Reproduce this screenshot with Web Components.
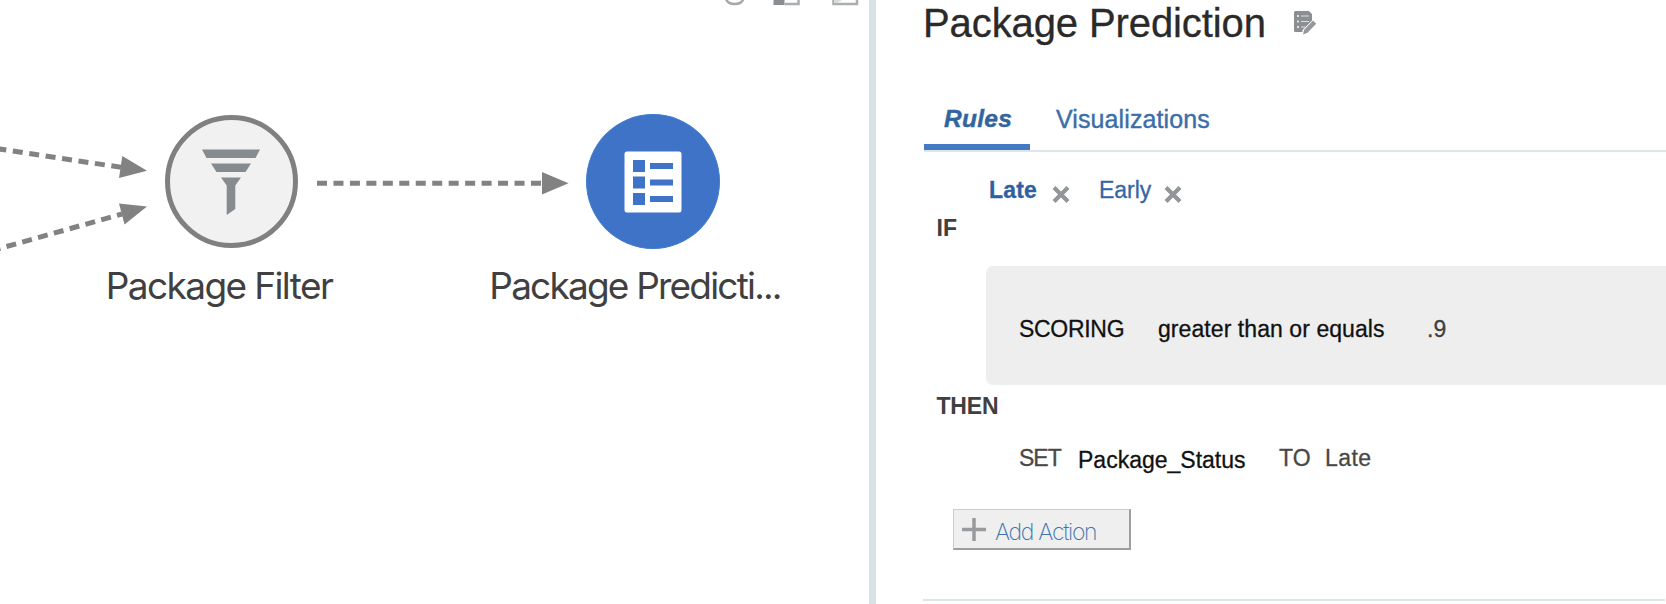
<!DOCTYPE html>
<html lang="en">
<head>
<meta charset="utf-8">
<title>Package Prediction</title>
<style>
html,body{margin:0;height:100%;overflow:hidden;background:#fff}
body{font-family:"Liberation Sans",Arial,sans-serif}
</style>
</head>
<body>
<pipeline-app></pipeline-app>
<script>
const define = (name, html) => customElements.define(name, class extends HTMLElement {
  constructor() {
    super();
    const t = document.createElement('template');
    t.innerHTML = html;
    this.attachShadow({mode: 'open'}).append(t.content.cloneNode(true));
  }
});

define('tool-strip', `
<style>:host{display:block;height:8px}svg{display:block}</style>
<svg width="869" height="8" viewBox="0 0 869 8">
  <path d="M726 -1c1 3 4.500 5 8.700 5s7.700-2 8.700-5" fill="none" stroke="#a4a8ab" stroke-width="2.500"/>
  <path d="M773.500 0h11v5h-11z" fill="#8a8e91"/><path d="M784.500 4h14V0" fill="none" stroke="#a9adaf" stroke-width="2.500"/>
  <path d="M833.500 0v4h23.500V0" fill="none" stroke="#abaeb1" stroke-width="2.500"/><path d="M834 0h8l-5 3h-3z" fill="#d9dbdc"/>
</svg>`);

define('flow-links', `
<style>:host{display:block}svg{display:block}</style>
<svg width="868" height="604" viewBox="0 0 868 604">
  <g fill="none" stroke="#828282" stroke-width="5">
    <path d="M-3.600 148.600L121 167.300" stroke-dasharray="10 6.600"/>
    <path d="M-9.500 251L122 214" stroke-dasharray="10 6.400" stroke-dashoffset="-.200"/>
    <path d="M317 183.200H543" stroke-dasharray="10 6.460"/>
  </g>
  <g fill="#828282">
    <path d="M122.300 156L147 170.800 119 178z"/>
    <path d="M119 203.500L147 206.500 124.500 224.500z"/>
    <path d="M542 172L568.500 183.200 542 194.500z"/>
  </g>
</svg>`);

define('flow-node', `
<style>
:host{display:flex;flex-direction:column;align-items:center;width:320px}
.disc{box-sizing:border-box;width:134px;height:135px;border-radius:50%;background:#3f73c8;border:1px solid #3f7dcb;display:grid;place-items:center}
:host([kind=filter]) .disc{width:133px;height:133px;margin:1px;background:#f1f1f1;border:5px solid #808080}
.name{font:400 37px/44px Inter,sans-serif;color:#404040;white-space:nowrap;margin:15px var(--pull,0) 0 0;letter-spacing:var(--track,-1px)}
</style>
<div class="disc"><slot name="icon"></slot></div>
<div class="name"><slot></slot></div>`);

define('funnel-icon', `
<style>:host{display:block;width:60px;height:68px}svg{display:block}</style>
<svg width="60" height="68" viewBox="0 0 60 68" fill="#868b8f">
  <path d="M1 1.500H59L54.500 10H5.500zM10 15.500H50L44.500 24H15.500zM20 29.500H40L34.300 37.500V61L25.700 67V37.500z"/>
</svg>`);

define('rules-icon', `
<style>:host{display:block;width:58px;height:62px}svg{display:block}</style>
<svg width="58" height="62" viewBox="0 0 58 62">
  <rect x=".5" y=".5" width="57" height="61" rx="2.500" fill="#fff"/>
  <path d="M9 9h12v12H9zM9 25.500h12v12H9zM9 42h12v12H9zM26 12h23v6H26zM26 28.500h23v6H26zM26 45h23v6H26z" fill="#3f73c8"/>
</svg>`);

define('flow-canvas', `
<style>
:host{display:block;position:relative;overflow:hidden;background:#fff}
flow-links{position:absolute;left:0;top:0}
flow-node{position:absolute;top:114px}
</style>
<tool-strip></tool-strip>
<flow-links></flow-links>
<flow-node kind="filter" style="left:71px;--track:-1.6px;--pull:24px"><funnel-icon slot="icon"></funnel-icon>Package Filter</flow-node>
<flow-node style="left:493px;--track:-1.8px;--pull:36px"><rules-icon slot="icon"></rules-icon>Package Predicti...</flow-node>`);

define('edit-icon', `
<style>:host{display:block}svg{display:block}</style>
<svg width="24" height="25" viewBox="0 0 24 25">
  <path d="M2.500 1H16l3 3v6.500L9.500 20v2H2.500Q1 22 1 20.500V2.500Q1 1 2.500 1z" fill="#8b8f91"/>
  <path d="M4 5h2v2H4zM4 10.500h2v2H4zM4 16h2v2H4zM8 5.500h8v1H8zM8 11h8v1H8zM8 16.500h4v1H8z" fill="#dfe1e2"/>
  <path d="M20 10.500l3.200 3.200L14.500 22.800 10 24.500l1.200-4.800z" fill="#94989a"/>
</svg>`);

define('panel-title', `
<style>
:host{display:flex;align-items:flex-start;height:91px;padding-top:2px;box-sizing:border-box}
h1{margin:0;font-size:40px;line-height:40px;font-weight:400;color:#2a2a2a;width:370px;padding-top:1px;white-space:nowrap;box-sizing:border-box;letter-spacing:-.1px;margin-left:-1px;-webkit-text-stroke:.3px}
edit-icon{margin-top:8px}
</style><h1><slot></slot></h1><edit-icon></edit-icon>`);

define('tab-bar', `
<style>:host{display:flex;height:59px;border-bottom:2px solid #dfe6ea}</style><slot></slot>`);

define('tab-item', `
<style>
:host{display:block;box-sizing:border-box;height:59px;padding:16px 20px 0 26px;font-size:25px;line-height:24px;letter-spacing:.1px;color:#3a6ea8;white-space:nowrap;-webkit-text-stroke:.4px}
:host([active]){font-weight:700;font-style:italic;font-size:24.500px;color:#32659f;width:106px;padding-left:20px;letter-spacing:.3px;border-bottom:6px solid #447ac4}
</style><slot></slot>`);

define('rule-tab', `
<style>
:host{display:flex;font-size:23px;line-height:24px;color:#3566a5;-webkit-text-stroke:.3px;letter-spacing:-.05px}
:host([active]){font-weight:700;color:#2f609f;letter-spacing:.2px}
span{width:var(--w)}
svg{display:block;margin-top:8px}
</style><span><slot></slot></span>
<svg width="18" height="17" viewBox="0 0 18 17"><path d="M2 1.500L16 15.500M16 1.500L2 15.500" stroke="#929698" stroke-width="4.200"/></svg>`);

define('rule-keyword', `
<style>:host{display:block;padding-left:12.500px;font-weight:700;font-size:23px;line-height:24px;color:#404040}</style><slot></slot>`);

define('condition-box', `
<style>
:host{display:grid;grid-template-columns:139px 269px 1fr;align-items:center;box-sizing:border-box;height:119px;margin-left:62px;padding:6px 0 0 33px;background:#eee;border-radius:7px 0 0 7px;font-size:23px;line-height:24px;color:#111;white-space:nowrap;-webkit-text-stroke:.3px}
::slotted(span:nth-child(1)){letter-spacing:-.300px}
::slotted(span:nth-child(2)){letter-spacing:.070px}
::slotted(span:nth-child(3)){color:#404040}
</style><slot></slot>`);

define('action-row', `
<style>
:host{display:grid;grid-template-columns:59px 201px 46px 1fr;margin-left:95px;font-size:23px;line-height:24px;color:#484848;white-space:nowrap;-webkit-text-stroke:.3px}
::slotted(span:nth-child(1)){letter-spacing:-1px}
::slotted(span:nth-child(2)){color:#111;padding-top:2px}
::slotted(span:nth-child(4)){letter-spacing:.4px}
</style><slot></slot>`);

define('add-button', `
<style>
:host{display:flex;box-sizing:border-box;width:178px;height:41px;margin-left:29px;padding:8px 0 0 8px;background:#efefef;border:1px solid #c0d0da;border-right:2px solid #9b9fa2;border-bottom:2px solid #9b9fa2;font:200 23px/28px Inter,sans-serif;color:#3f73ad;letter-spacing:-1.300px;white-space:nowrap}
svg{display:block;flex:none;margin-right:9px}
</style>
<svg width="24" height="24" viewBox="0 0 24 24"><path d="M12 0v23M0 11.500h24" stroke="#989b9d" stroke-width="3.500"/></svg><slot></slot>`);

define('rule-panel', `
<style>
:host{display:flex;flex-direction:column;box-sizing:border-box;padding-left:48px;overflow:hidden;background:#fff}
.rules{display:flex;gap:29px;margin:26px 0 13px 65px}
.rules+rule-keyword{margin-bottom:26px}
condition-box+rule-keyword{margin:9px 0 28px}
action-row{margin-bottom:37px}
hr{width:100%;margin:49px 0 0 -1px;border:0;height:2px;background:#d9e5e7}
add-button,hr{flex:none}
</style>
<panel-title>Package Prediction</panel-title>
<tab-bar><tab-item active>Rules</tab-item><tab-item>Visualizations</tab-item></tab-bar>
<div class="rules"><rule-tab active style="--w:63px">Late</rule-tab><rule-tab style="--w:65px">Early</rule-tab></div>
<rule-keyword>IF</rule-keyword>
<condition-box><span>SCORING</span><span>greater than or equals</span><span>.9</span></condition-box>
<rule-keyword style="letter-spacing:-.2px">THEN</rule-keyword>
<action-row><span>SET</span><span>Package_Status</span><span>TO</span><span>Late</span></action-row>
<add-button>Add Action</add-button>
<hr>`);

define('pipeline-app', `
<style>
:host{display:grid;grid-template-columns:869px 7px 1fr;height:604px}
.split{background:#d8e1e5}
</style>
<flow-canvas></flow-canvas><div class="split"></div><rule-panel></rule-panel>`);
</script>
</body>
</html>
